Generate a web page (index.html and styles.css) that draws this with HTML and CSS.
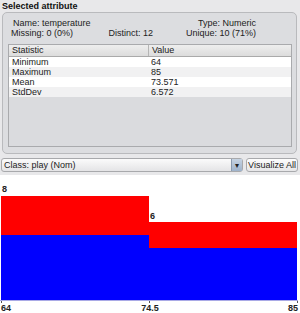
FILE: index.html
```html
<!DOCTYPE html>
<html lang="en">
<head>
    <meta charset="UTF-8">
    <title>Selected attribute</title>
    <link rel="stylesheet" href="styles.css">
</head>
<body>
    <div class="title">Selected attribute</div>
    <div class="group">
        <div class="info">
            <div class="info-left">
                <div class="name">Name: temperature</div>
                <div class="row-split">
                    <span>Missing: 0 (0%)</span>
                    <span>Distinct: 12</span>
                </div>
            </div>
            <div class="info-right">
                <div>Type: Numeric</div>
                <div>Unique: 10 (71%)</div>
            </div>
        </div>
        <div class="table">
            <div class="thead">
                <div class="cell">Statistic</div>
                <div class="cell">Value</div>
            </div>
            <div class="trow">
                <div class="cell">Minimum</div>
                <div class="cell">64</div>
            </div>
            <div class="trow">
                <div class="cell">Maximum</div>
                <div class="cell">85</div>
            </div>
            <div class="trow">
                <div class="cell">Mean</div>
                <div class="cell">73.571</div>
            </div>
            <div class="trow">
                <div class="cell">StdDev</div>
                <div class="cell">6.572</div>
            </div>
        </div>
    </div>
    <div class="class-row">
        <div class="combo">
            <span class="combo-text">Class: play (Nom)</span>
            <span class="combo-arrow">&#9662;</span>
        </div>
        <button class="btn">Visualize All</button>
    </div>
    <div class="hist">
        <svg width="300" height="138" viewBox="0 0 300 138">
            <rect x="1" y="21" width="148" height="39" fill="#ff0000"/>
            <rect x="1" y="60" width="148" height="65" fill="#0000ff"/>
            <rect x="149" y="47" width="148" height="26" fill="#ff0000"/>
            <rect x="149" y="73" width="148" height="52" fill="#0000ff"/>
            <line x1="0" y1="125.5" x2="298" y2="125.5" stroke="#a9a9e6"/>
            <path d="M1.5 126 V128 M149.5 126 V128 M297.5 126 V128" stroke="#555" stroke-width="1"/>
            <text x="2" y="17" class="lbl">8</text>
            <text x="150" y="44" class="lbl">6</text>
            <text x="1" y="136" class="lbl">64</text>
            <text x="150" y="136" class="lbl" text-anchor="middle">74.5</text>
            <text x="298" y="136" class="lbl" text-anchor="end">85</text>
        </svg>
    </div>
</body>
</html>
```
FILE: styles.css
```css
body {
    margin: 0;
    width: 300px;
    height: 313px;
    overflow: hidden;
    background-color: #e8e8ea;
    font-family: 'Liberation Sans', Arial, sans-serif;
    font-size: 9px;
    color: #222;
}

.title {
    font-weight: bold;
    padding: 1px 0 0 2px;
    height: 10px;
    line-height: 10px;
    color: #111;
}

.group {
    margin: 1px 3px 0 2px;
    height: 140px;
    border: 1px solid #b9babd;
    border-radius: 5px;
    background-color: #dcdde0;
    padding: 0 4px 0 5px;
    display: flex;
    flex-direction: column;
}

.info {
    display: flex;
    justify-content: space-between;
    padding: 5px 0 0 3px;
    height: 26px;
    line-height: 10px;
}

.info-left {
    width: 142px;
}

.info-left .name {
    padding-left: 2px;
}

.row-split {
    display: flex;
    justify-content: space-between;
}

.info-right {
    text-align: right;
    padding-right: 36px;
}

.table {
    flex: 1;
    margin-bottom: 6px;
    border: 1px solid #a9aaad;
    background-color: #dadbde;
}

.thead, .trow {
    display: flex;
    height: 10px;
    line-height: 10px;
}

.thead {
    height: 11px;
    line-height: 11px;
    background: linear-gradient(#eeeeee, #dcdcdc);
    border-bottom: 1px solid #aaaaaa;
}

.thead .cell:first-child {
    border-right: 1px solid #b5b5b5;
}

.cell {
    padding-left: 3px;
}

.cell:first-child {
    width: 136px;
}

.trow {
    background-color: #ffffff;
}

.trow:nth-child(odd) {
    background-color: #f1f1f2;
}

.class-row {
    display: flex;
    gap: 3px;
    padding: 4px 2px 0 1px;
    height: 14px;
}

.combo {
    width: 242px;
    box-sizing: border-box;
    display: flex;
    justify-content: space-between;
    align-items: center;
    border: 1px solid #a8a9ac;
    border-radius: 3px;
    background: linear-gradient(#fbfbfb, #e4e4e6);
    padding-left: 2px;
}

.combo-arrow {
    width: 10px;
    height: 100%;
    display: flex;
    align-items: center;
    justify-content: center;
    font-size: 8px;
    color: #222;
    background: linear-gradient(#c6d3e2, #9fb3cb);
    border-left: 1px solid #8a9bb0;
}

.btn {
    flex: 1;
    margin: 0;
    padding: 0;
    font-family: inherit;
    font-size: 9px;
    color: #222;
    border: 1px solid #a8a9ac;
    border-radius: 3px;
    background: linear-gradient(#fdfdfd, #e6e6e8);
}

.hist {
    margin-top: 3px;
    background-color: #ffffff;
    height: 138px;
}

.hist svg {
    display: block;
}

.lbl {
    font-family: 'Liberation Sans', Arial, sans-serif;
    font-size: 9px;
    font-weight: bold;
    fill: #222;
}
```
